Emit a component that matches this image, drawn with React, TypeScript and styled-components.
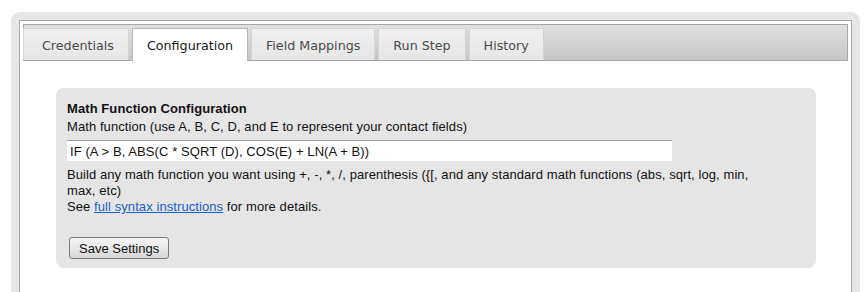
import React, { useState } from "react";
import styled, { createGlobalStyle } from "styled-components";

const GlobalStyle = createGlobalStyle`
  html, body {
    margin: 0;
    padding: 0;
    background: #ffffff;
    overflow: hidden;
  }
`;

const TABS = ["Credentials", "Configuration", "Field Mappings", "Run Step", "History"];

const StyledFrame = styled.div`
  margin: 12px 0 0 11px;
  width: 849px;
  height: 280px;
  box-sizing: border-box;
  background: #e6e6e6;
  border-radius: 9px 9px 0 0;
  padding: 8px 8px 0 8px;
`;

const StyledPanel = styled.div`
  height: 100%;
  box-sizing: border-box;
  background: #ffffff;
  border: 1px solid #a8a8a8;
  border-bottom: none;
  padding: 3px 3px 0 3px;
`;

const StyledTabBar = styled.div`
  display: flex;
  align-items: flex-end;
  gap: 3px;
  height: 37px;
  box-sizing: border-box;
  padding-top: 3px;
  border: 1px solid #a6a6a6;
  background: linear-gradient(#e0e0e0, #c6c6c6);
`;

const StyledTab = styled.div<{ $active: boolean }>`
  box-sizing: border-box;
  height: ${(p) => (p.$active ? "33px" : "32px")};
  margin-bottom: ${(p) => (p.$active ? "-1px" : "0")};
  padding: 1px 14px 0 14px;
  display: flex;
  align-items: center;
  font-family: "DejaVu Sans", Verdana, sans-serif;
  font-size: 12.7px;
  color: ${(p) => (p.$active ? "#1a1a1a" : "#4a4a4a")};
  background: ${(p) => (p.$active ? "#ffffff" : "linear-gradient(#f0f0f0, #e6e6e6)")};
  border: 1px solid ${(p) => (p.$active ? "#b8b8b8" : "#d4d4d4")};
  border-bottom: none;
  cursor: pointer;

  &:first-child {
    margin-left: -1px;
    padding-left: 18px;
    padding-right: 14px;
  }
`;

const StyledContent = styled.div`
  padding: 27px 32px 0 33px;
`;

const StyledBox = styled.div`
  background: #e5e5e5;
  border-radius: 8px;
  padding: 12px 11px 9px 11px;
  font-family: "Liberation Sans", Arial, sans-serif;
  font-size: 13px;
  letter-spacing: 0.08px;
  line-height: 16px;
  color: #111111;
`;

const StyledTitle = styled.div`
  font-weight: bold;
  line-height: 18px;
`;

const StyledLabel = styled.div`
  line-height: 18px;
`;

const StyledInput = styled.input`
  display: block;
  box-sizing: border-box;
  width: 605px;
  height: 21px;
  margin: 4px 0 6px 0;
  padding: 0 3px;
  border: none;
  border-top: 1px solid #a0a0a0;
  background: #ffffff;
  font-family: "Liberation Sans", Arial, sans-serif;
  font-size: 13px;
  letter-spacing: 0.08px;
  color: #111111;
  outline: none;
`;

const StyledHelp = styled.div`
  width: 700px;
`;

const StyledLink = styled.a`
  color: #1a5fc9;
  text-decoration: underline;
`;

const StyledButton = styled.button`
  display: block;
  margin-top: 22px;
  margin-left: 2px;
  height: 22px;
  padding: 0 9px;
  font-family: "Liberation Sans", Arial, sans-serif;
  font-size: 13px;
  color: #111111;
  border: 1px solid #7a7a7a;
  border-radius: 3px;
  background: linear-gradient(#f6f6f6 0%, #e8e8e8 50%, #d6d6d6 100%);
`;

function App() {
  const [active, setActive] = useState("Configuration");
  const [formula, setFormula] = useState("IF (A > B, ABS(C * SQRT (D), COS(E) + LN(A + B))");

  return (
    <>
      <GlobalStyle />
      <StyledFrame>
        <StyledPanel>
          <StyledTabBar>
            {TABS.map((t) => (
              <StyledTab key={t} $active={t === active} onClick={() => setActive(t)}>
                {t}
              </StyledTab>
            ))}
          </StyledTabBar>
          <StyledContent>
            <StyledBox>
              <StyledTitle>Math Function Configuration</StyledTitle>
              <StyledLabel>Math function (use A, B, C, D, and E to represent your contact fields)</StyledLabel>
              <StyledInput value={formula} onChange={(e) => setFormula(e.target.value)} />
              <StyledHelp>
                Build any math function you want using +, -, *, /, parenthesis ({"{"}[, and any standard math
                functions (abs, sqrt, log, min, max, etc)
                <br />
                See <StyledLink href="#">full syntax instructions</StyledLink> for more details.
              </StyledHelp>
              <StyledButton>Save Settings</StyledButton>
            </StyledBox>
          </StyledContent>
        </StyledPanel>
      </StyledFrame>
    </>
  );
}

export default App;
